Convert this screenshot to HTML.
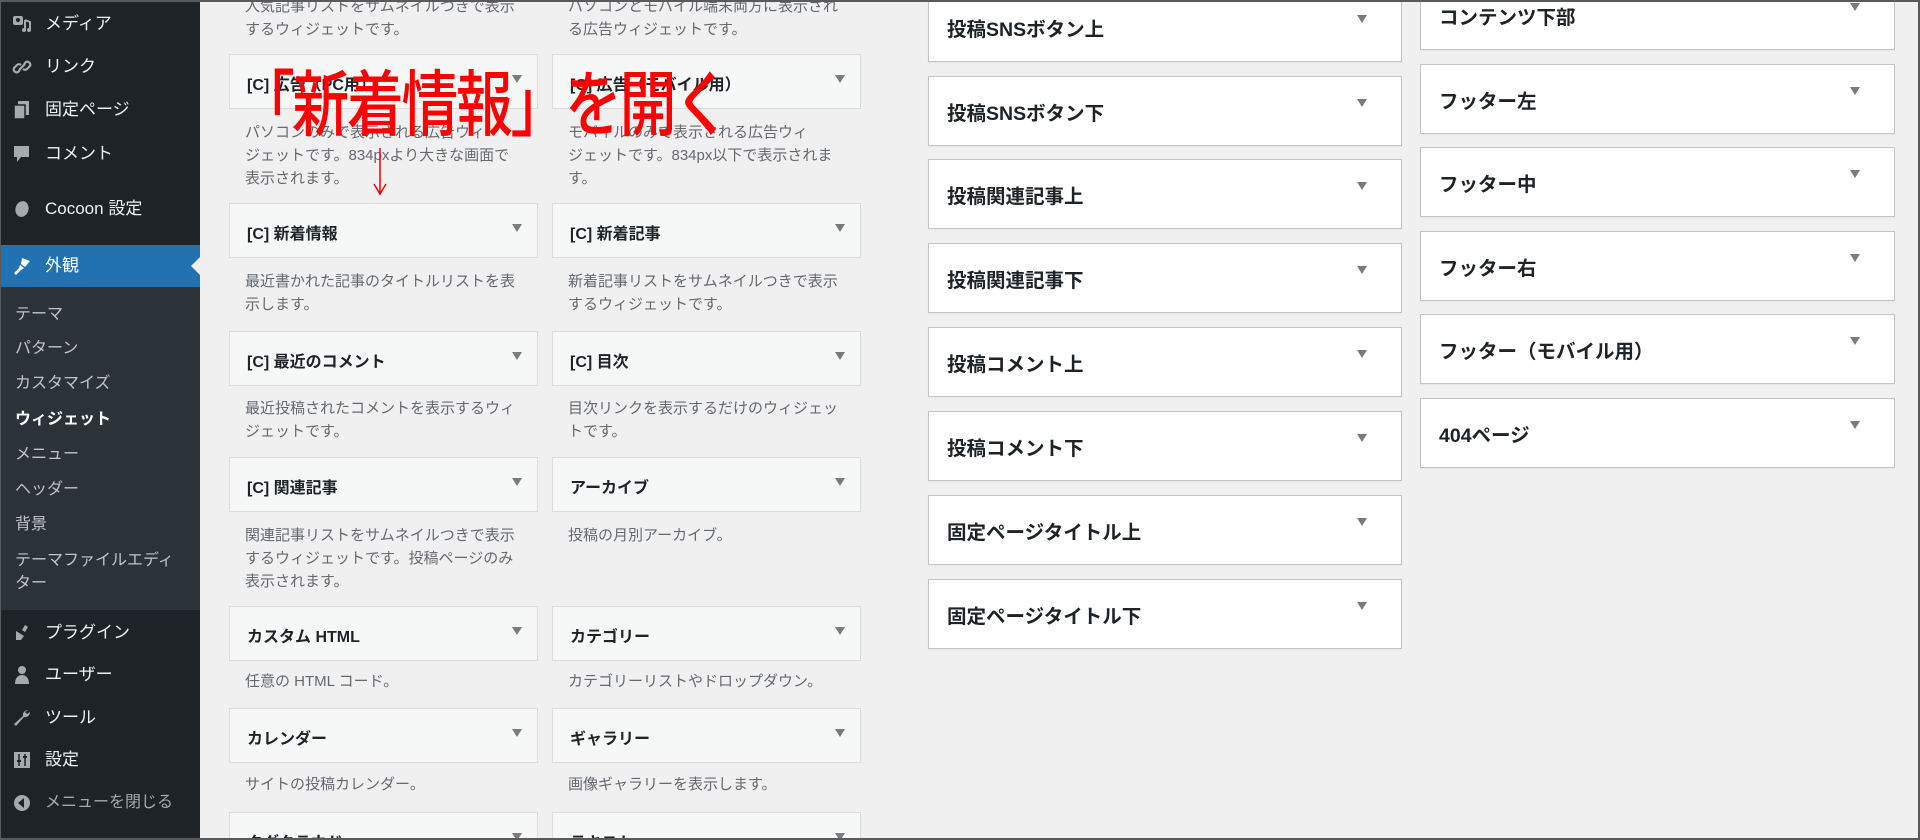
<!DOCTYPE html>
<html><head><meta charset="utf-8"><style>
*{margin:0;padding:0;box-sizing:border-box}
html,body{width:1920px;height:840px;overflow:hidden}
body{background:#f0f0f1;font-family:"Liberation Sans","Noto Sans CJK JP",sans-serif}
#wrap{position:relative;width:1920px;height:840px;overflow:hidden}
#frame{position:absolute;left:0;top:0;width:1920px;height:840px;border:2px solid #5a5a5a;border-left:1px solid #5a5a5a;z-index:50;pointer-events:none}
#side{position:absolute;left:0;top:0;width:200px;height:840px;background:#1d2327}
#sub{position:absolute;left:0;top:287px;width:200px;height:323px;background:#2c3338}
#act{position:absolute;left:0;top:245px;width:200px;height:42px;background:#2271b1}
#act:after{content:"";position:absolute;right:0;top:12px;border:9px solid transparent;border-right-color:#f0f0f1}
.m{position:absolute;left:45px;color:#f0f0f1;font-size:17px;line-height:20px;transform:translateY(-10px)}
.s{position:absolute;left:15px;color:#c3c4c7;font-size:16px;line-height:20px;transform:translateY(-10px)}
.ic{position:absolute;left:12px;width:20px;height:20px;transform:translateY(-10px)}
.c{position:absolute;background:#f6f7f7;border:1px solid #dcdcde;width:309px;height:55px;font-size:16px;font-weight:bold;color:#1d2327;padding:16px 0 0 17px}
.c1{left:229px}.c2{left:552px}
.c:after,.w:after{content:"";position:absolute;border:5px solid transparent;border-top:8px solid #787c82}
.c:after{right:15px;top:20px}
.d{position:absolute;font-size:15px;line-height:23px;color:#646970;width:290px}
.d1{left:245px}.d2{left:568px}
.w{position:absolute;background:#fff;border:1px solid #c3c4c7;box-shadow:0 1px 1px rgba(0,0,0,.04);height:70px;font-size:19.5px;font-weight:bold;color:#1d2327;padding:20px 0 0 18px}
.w1{left:928px;width:474px}.w2{left:1420px;width:475px}
.w:after{right:34px;top:22px}
</style></head><body><div id="wrap">
<div id="side"></div><div id="sub"></div><div id="act"></div>
<svg class="ic" style="top:24px" viewBox="0 0 20 20"><rect x="1" y="2" width="10" height="9" rx="2" fill="#a7aaad"/><circle cx="6" cy="6" r="2" fill="#1d2327"/><path d="M13 6v10M13 6l5 2v8" stroke="#a7aaad" stroke-width="2" fill="none"/><circle cx="12" cy="16" r="2" fill="#a7aaad"/><circle cx="17" cy="16" r="2" fill="#a7aaad"/></svg>
<div class="m" style="top:24px">メディア</div>
<svg class="ic" style="top:67px" viewBox="0 0 20 20"><path d="M8 13l-2 2a3 3 0 01-4-4l3-3a3 3 0 014 0M12 7l2-2a3 3 0 014 4l-3 3a3 3 0 01-4 0M7 13l6-6" stroke="#a7aaad" stroke-width="2.2" fill="none"/></svg>
<div class="m" style="top:67px">リンク</div>
<svg class="ic" style="top:110px" viewBox="0 0 20 20"><rect x="6" y="1" width="11" height="14" fill="#a7aaad"/><rect x="2" y="5" width="11" height="14" fill="#a7aaad" stroke="#1d2327" stroke-width="1.5"/></svg>
<div class="m" style="top:110px">固定ページ</div>
<svg class="ic" style="top:154px" viewBox="0 0 20 20"><path d="M2 2h15v11H9l-4 5v-5H2z" fill="#a7aaad"/></svg>
<div class="m" style="top:154px">コメント</div>
<svg class="ic" style="top:209px" viewBox="0 0 20 20"><ellipse cx="10" cy="10" rx="6.5" ry="8" fill="#a7aaad" transform="rotate(15 10 10)"/></svg>
<div class="m" style="top:209px">Cocoon 設定</div>
<svg class="ic" style="top:266px" viewBox="0 0 20 20"><path d="M10 2l8 3-5 6-4-3zM8 9l4 3-3 2-5 5-2-2 5-5z" fill="#fff"/></svg>
<div class="m" style="top:266px;color:#fff">外観</div>
<div class="s" style="top:315px">テーマ</div>
<div class="s" style="top:349px">パターン</div>
<div class="s" style="top:384px">カスタマイズ</div>
<div class="s" style="top:420px;color:#fff;font-weight:bold">ウィジェット</div>
<div class="s" style="top:455px">メニュー</div>
<div class="s" style="top:490px">ヘッダー</div>
<div class="s" style="top:525px">背景</div>
<div class="s" style="top:561px">テーマファイルエディ</div>
<div class="s" style="top:584px">ター</div>
<svg class="ic" style="top:633px" viewBox="0 0 20 20"><path d="M13 2l-3 5 3 2 3-5zM4 8l8 5-3 4H4z" fill="#a7aaad"/></svg>
<div class="m" style="top:633px">プラグイン</div>
<svg class="ic" style="top:675px" viewBox="0 0 20 20"><circle cx="10" cy="5" r="4" fill="#a7aaad"/><path d="M3 19c0-6 3-9 7-9s7 3 7 9z" fill="#a7aaad"/></svg>
<div class="m" style="top:675px">ユーザー</div>
<svg class="ic" style="top:718px" viewBox="0 0 20 20"><path d="M16 2a5 5 0 00-5 6L2 16l2 2 8-9a5 5 0 006-5l-3 2-2-2z" fill="#a7aaad"/></svg>
<div class="m" style="top:718px">ツール</div>
<svg class="ic" style="top:760px" viewBox="0 0 20 20"><rect x="2" y="2" width="16" height="16" fill="#a7aaad"/><path d="M7 4v12M13 4v12" stroke="#1d2327" stroke-width="1.5"/><rect x="5" y="10" width="4" height="2" fill="#1d2327"/><rect x="11" y="6" width="4" height="2" fill="#1d2327"/></svg>
<div class="m" style="top:760px">設定</div>
<svg class="ic" style="top:803px" viewBox="0 0 20 20"><circle cx="10" cy="10" r="8" fill="#a7aaad"/><path d="M12 5v10l-6-5z" fill="#1d2327"/></svg>
<div class="m" style="top:803px;color:#a7aaad;font-size:16px">メニューを閉じる</div>

<div class="d d1" style="top:-5px">人気記事リストをサムネイルつきで表示<br>するウィジェットです。</div>
<div class="d d2" style="top:-5px">パソコンとモバイル端末両方に表示され<br>る広告ウィジェットです。</div>
<div class="c c1" style="top:54px">[C] 広告（PC用）</div><div class="c c2" style="top:54px">[C] 広告（モバイル用）</div>
<div class="d d1" style="top:121px">パソコンのみで表示される広告ウィ<br>ジェットです。834pxより大きな画面で<br>表示されます。</div>
<div class="d d2" style="top:121px">モバイルのみで表示される広告ウィ<br>ジェットです。834px以下で表示されま<br>す。</div>
<div class="c c1" style="top:203px">[C] 新着情報</div><div class="c c2" style="top:203px">[C] 新着記事</div>
<div class="d d1" style="top:270px">最近書かれた記事のタイトルリストを表<br>示します。</div>
<div class="d d2" style="top:270px">新着記事リストをサムネイルつきで表示<br>するウィジェットです。</div>
<div class="c c1" style="top:331px">[C] 最近のコメント</div><div class="c c2" style="top:331px">[C] 目次</div>
<div class="d d1" style="top:397px">最近投稿されたコメントを表示するウィ<br>ジェットです。</div>
<div class="d d2" style="top:397px">目次リンクを表示するだけのウィジェッ<br>トです。</div>
<div class="c c1" style="top:457px">[C] 関連記事</div><div class="c c2" style="top:457px">アーカイブ</div>
<div class="d d1" style="top:524px">関連記事リストをサムネイルつきで表示<br>するウィジェットです。投稿ページのみ<br>表示されます。</div>
<div class="d d2" style="top:524px">投稿の月別アーカイブ。</div>
<div class="c c1" style="top:606px">カスタム HTML</div><div class="c c2" style="top:606px">カテゴリー</div>
<div class="d d1" style="top:670px">任意の HTML コード。</div>
<div class="d d2" style="top:670px">カテゴリーリストやドロップダウン。</div>
<div class="c c1" style="top:708px">カレンダー</div><div class="c c2" style="top:708px">ギャラリー</div>
<div class="d d1" style="top:773px">サイトの投稿カレンダー。</div>
<div class="d d2" style="top:773px">画像ギャラリーを表示します。</div>
<div class="c c1" style="top:812px">タグクラウド</div><div class="c c2" style="top:812px">テキスト</div>

<div class="w w1" style="top:-8px">投稿SNSボタン上</div>
<div class="w w1" style="top:76px">投稿SNSボタン下</div>
<div class="w w1" style="top:159px">投稿関連記事上</div>
<div class="w w1" style="top:243px">投稿関連記事下</div>
<div class="w w1" style="top:327px">投稿コメント上</div>
<div class="w w1" style="top:411px">投稿コメント下</div>
<div class="w w1" style="top:495px">固定ページタイトル上</div>
<div class="w w1" style="top:579px">固定ページタイトル下</div>
<div class="w w2" style="top:-20px">コンテンツ下部</div>
<div class="w w2" style="top:64px">フッター左</div>
<div class="w w2" style="top:147px">フッター中</div>
<div class="w w2" style="top:231px">フッター右</div>
<div class="w w2" style="top:314px">フッター（モバイル用）</div>
<div class="w w2" style="top:398px">404ページ</div>

<div style="position:absolute;left:238px;top:64px;font-size:72px;line-height:84px;font-weight:500;color:#f00;letter-spacing:-3px;z-index:10;white-space:nowrap;transform:scaleX(0.79);transform-origin:0 0">「新着情報」を開く</div>
<svg style="position:absolute;left:370px;top:148px;z-index:10" width="20" height="50" viewBox="0 0 20 50"><path d="M10 0v46M4 36l6 10 6-10" stroke="#e00" stroke-width="1.5" fill="none"/></svg>
<div id="frame"></div>
</div></body></html>
